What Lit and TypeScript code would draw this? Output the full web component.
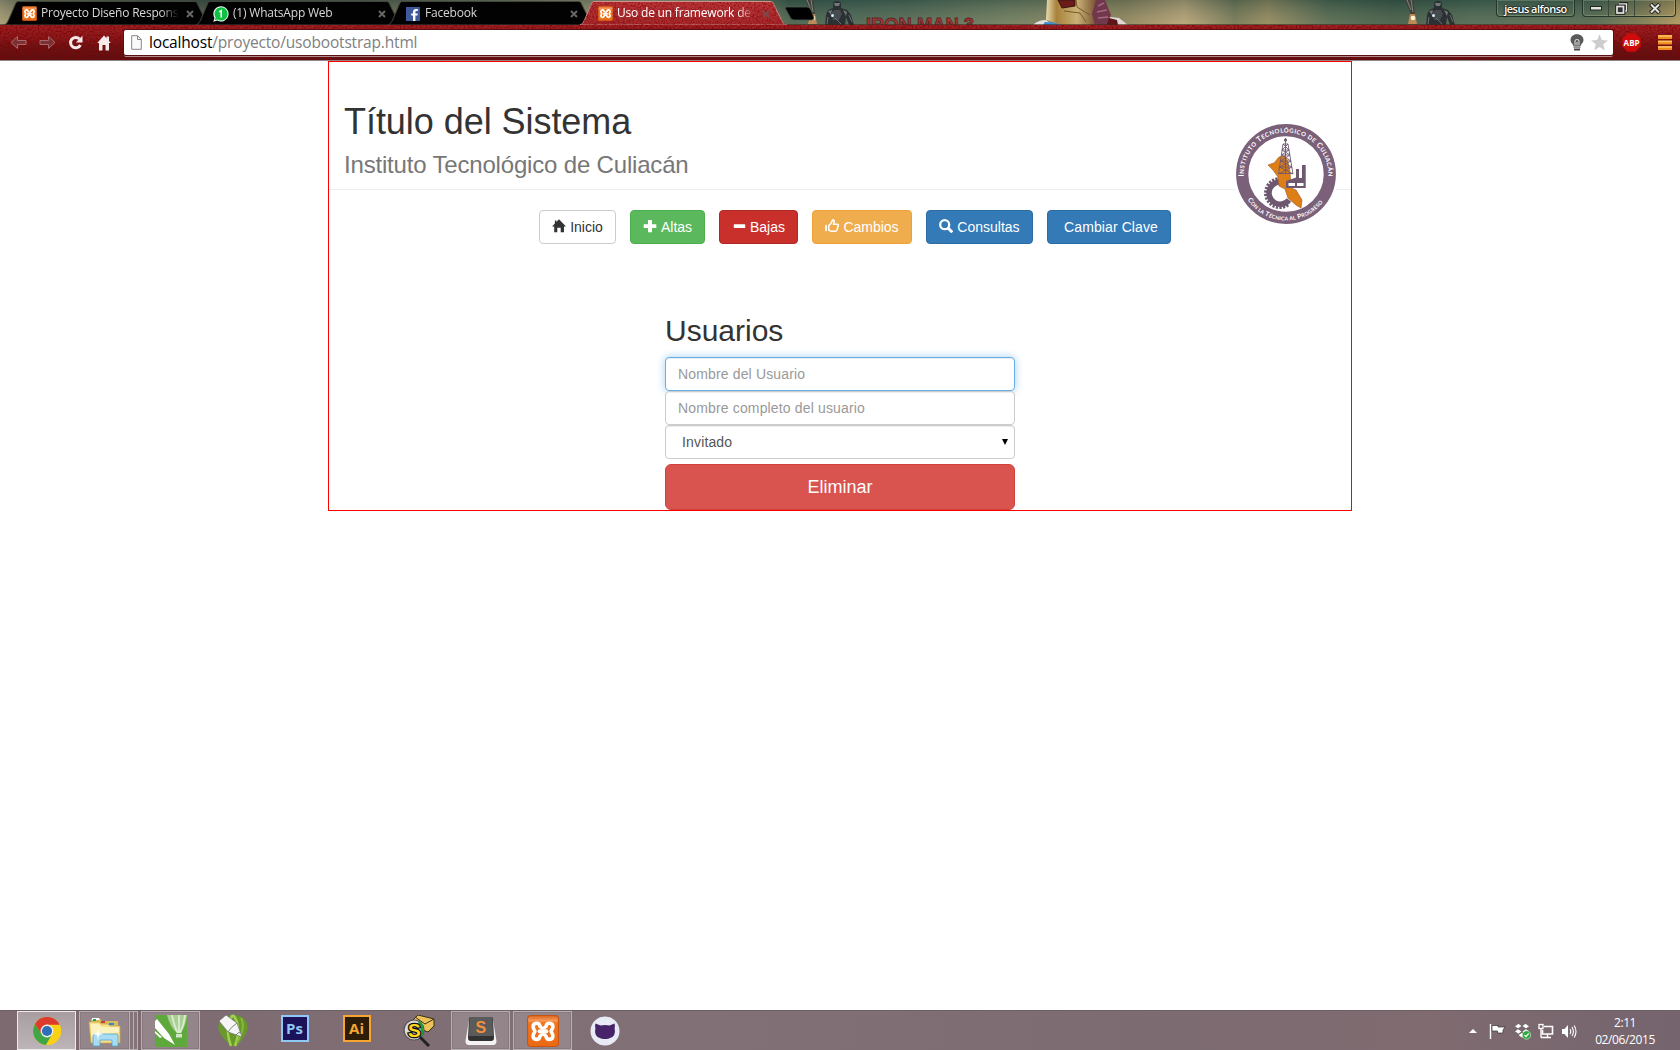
import { LitElement, html, css, svg, nothing } from "lit";
import { customElement, property } from "lit/decorators.js";

const xampp = (size: number) => html`<svg width=${size} height=${size} viewBox="0 0 24 24">
  <defs><linearGradient id="xo" x1="0" y1="0" x2="0" y2="1"><stop offset="0" stop-color="#d9631a"/><stop offset=".16" stop-color="#f59a5c"/><stop offset=".24" stop-color="#f0751f"/><stop offset="1" stop-color="#ea6a14"/></linearGradient></defs>
  <rect x=".4" y=".4" width="23.2" height="23.2" rx="2.4" fill="url(#xo)" stroke="#c9540f" stroke-width=".8"/>
  <path d="M9.700 8.400 C9.200 5.500 4.600 5.300 4.600 8.900 C4.600 10.700 5.900 11 5.900 12.200 C5.900 13.400 4.600 13.800 4.600 15.600 C4.600 19.200 9.200 19 9.700 16 M14.300 8.400 C14.800 5.500 19.400 5.300 19.400 8.900 C19.400 10.700 18.100 11 18.100 12.200 C18.100 13.400 19.400 13.800 19.400 15.600 C19.400 19.200 14.800 19 14.300 16" fill="none" stroke="#fff" stroke-width="2.700" stroke-linecap="round"/>
  <path d="M9.700 8.400 Q10.300 9.800 12 9.800 Q13.700 9.800 14.300 8.400 M9.700 16 Q10.300 14.600 12 14.600 Q13.700 14.600 14.300 16" fill="none" stroke="#fff" stroke-width="2.300"/>
  <path d="M9.600 12.200 H14.400" stroke="#fff" stroke-width="3.200" stroke-linecap="round"/>
</svg>`;

const whatsapp = html`<svg width="16" height="16" viewBox="0 0 16 16">
  <path d="M.3 15.7 L1.5 11.9 A7.6 7.6 0 1 1 4.4 14.6 Z" fill="#fff"/>
  <path d="M1.8 14.2 L2.6 11.6 A6.6 6.6 0 1 1 4.6 13.5 Z" fill="#0fc143"/>
  <path d="M6.1 6 L8.2 4.6 V11.4" fill="none" stroke="#fff" stroke-width="1.5"/>
</svg>`;

const facebook = html`<svg width="14" height="14" viewBox="0 0 14 14">
  <rect width="14" height="14" fill="#3f5a9c"/>
  <path d="M7 14 V8.6 H5.2 V6.5 H7 V5 C7 3 8.2 2 10 2 H11.8 V4.1 H10.5 C9.7 4.1 9.4 4.5 9.4 5.2 V6.5 H11.7 L11.4 8.6 H9.4 V14 Z" fill="#fff"/>
</svg>`;

@customElement("browser-tab")
class BrowserTab extends LitElement {
  static styles = css`
    :host { display: flex; position: relative; width: 208px; height: 25px; margin-right: -16px; flex: none; }
    .shape { position: absolute; left: 0; top: 0; }
    .row { position: relative; display: flex; align-items: center; width: 208px; padding: 2px 0 0 17px; box-sizing: border-box; height: 25px; }
    .icon { display: flex; width: 16px; justify-content: center; }
    .label { margin: -2px 7px 0 4px; flex: none; width: 138px; font: 12px/16px "Open Sans", sans-serif; letter-spacing: -0.2px; color: #d8d8d8; white-space: nowrap; overflow: hidden;
      -webkit-mask-image: linear-gradient(90deg, #000 calc(100% - 18px), transparent 100%); }
    .on .label { color: #fff; }
    .close { display: flex; }
  `;
  @property() label = "";
  @property() icon = "xampp";
  @property({ type: Boolean }) active = false;
  render() {
    const a = this.active;
    return html`
      <svg class="shape" width="208" height="25" viewBox="0 0 208 25">
        <defs>
          <linearGradient id="red" x1="0" y1="0" x2="0" y2="1"><stop offset="0" stop-color="#b8373b"/><stop offset="1" stop-color="#a32a2e"/></linearGradient>
          <filter id="grain" x="0" y="0" width="1" height="1"><feTurbulence type="fractalNoise" baseFrequency=".55" numOctaves="2"/><feColorMatrix values="0 0 0 0 .25  0 0 0 0 0  0 0 0 0 0  1.8 0 0 0 -.72"/><feComposite in2="SourceGraphic" operator="in"/></filter>
        </defs>
        <path d="M0 25 C3 24 3.5 22 5 19 L11 5 C12 2 13 1.5 15 1.5 H190 C192 1.5 193 2 194 5 L201 19 C202.500 22 203 24.500 207 25 Z" fill=${a ? "url(#red)" : "#020202"} stroke=${a ? "#cf8f8c" : "#43443a"} stroke-width="1"/>
        ${a ? svg`<path d="M0 25 L5 19 L12 2 H193 L201 19 L207 25 Z" fill="#000" filter="url(#grain)"/>` : nothing}
      </svg>
      <div class="row ${a ? "on" : ""}">
        <span class="icon">${this.icon === "xampp" ? xampp(15) : this.icon === "wa" ? whatsapp : facebook}</span>
        <span class="label">${this.label}</span>
        <svg class="close" width="8" height="8" viewBox="0 0 8 8"><path d="M1 1 L7 7 M7 1 L1 7" stroke=${a ? "#7d4a4b" : "#666"} stroke-width="2"/></svg>
      </div>`;
  }
}

const armor = (x: number) => svg`<g transform="translate(${x} 0)">
  <path d="M0 25 L1 15 L3 10 L8 8 L8 3 L10 1 H14 L16 3 V8 L22 10 L26 15 L29 25 H24 L21 17 L20 25 Z" fill="#2b3033"/>
  <path d="M9 3 H15 L14 6 H10 Z M3 11 L7 10 L6 15 Z M18 10 L22 12 L21 16 Z" fill="#73787a"/>
  <path d="M6 12 L10 10 L15 10 L17 14 L14 20 H8 Z" fill="#454b4e"/>
  <path d="M10 18 L16 24 M3 17 L2 24 M24 15 L27 22" stroke="#6b7073" stroke-width="1"/>
  <circle cx="7.500" cy="15.500" r="1.500" fill="#d6f0f5"/>
</g>`;

const flyer = (x: number) => svg`<g transform="translate(${x} 0)">
  <path d="M0 0 H8 L9 6 L10 15 H6 L3 7 Z" fill="#3f403b"/>
  <path d="M2 0 L6 10 M6 0 L8 12" stroke="#85857a" stroke-width="1"/>
  <path d="M5 14 H10 L11 19 L12 24 H3 Z" fill="#e0955a" opacity=".75"/><circle cx="8" cy="18" r="2.300" fill="#fff3cf"/>
</g>`;

const frameArt = html`<svg class="art" width="1680" height="25" viewBox="0 0 1680 25">
  <defs>
    <linearGradient id="fr" x1="0" x2="1680" y1="0" y2="0" gradientUnits="userSpaceOnUse">
      <stop offset="0" stop-color="#a59b78"/><stop offset=".02" stop-color="#6d6d55"/><stop offset=".13" stop-color="#3d4a42"/><stop offset=".3" stop-color="#71755e"/>
      <stop offset=".38" stop-color="#a1997a"/><stop offset=".44" stop-color="#8a8967"/><stop offset=".47" stop-color="#3b594b"/><stop offset=".5" stop-color="#3d5d52"/>
      <stop offset=".54" stop-color="#486455"/><stop offset=".6" stop-color="#66785e"/><stop offset=".67" stop-color="#8b835e"/><stop offset=".705" stop-color="#b7a47b"/>
      <stop offset=".735" stop-color="#6e7557"/><stop offset=".755" stop-color="#8e875f"/><stop offset=".79" stop-color="#4a6450"/><stop offset=".83" stop-color="#365446"/>
      <stop offset=".88" stop-color="#446253"/><stop offset=".95" stop-color="#48624f"/><stop offset=".98" stop-color="#7d7a54"/><stop offset="1" stop-color="#b0965d"/>
    </linearGradient>
    <linearGradient id="sh" x1="0" x2="0" y1="0" y2="1"><stop offset="0" stop-color="#17352f" stop-opacity=".3"/><stop offset="1" stop-color="#d5c28b" stop-opacity=".18"/></linearGradient>
    <linearGradient id="gold" x1="0" x2="1" y1="0" y2="0"><stop offset="0" stop-color="#e8dcb0"/><stop offset=".2" stop-color="#a9823c"/><stop offset=".6" stop-color="#c9b176"/><stop offset="1" stop-color="#6f4a2c"/></linearGradient>
  </defs>
  <rect width="1680" height="25" fill="url(#fr)"/><rect width="1680" height="25" fill="url(#sh)"/>
  ${flyer(805)}${armor(825)}${flyer(1405)}${armor(1426)}
  <text x="866" y="31" font-family="Liberation Sans" font-weight="bold" font-size="19" textLength="108" lengthAdjust="spacingAndGlyphs" fill="#a8383a" stroke="#5a2522" stroke-width=".9">IRON MAN 3</text>
  <path d="M1033 25 Q1038 20 1046 20 L1052 25 Z" fill="#e4e1dc"/>
  <path d="M1045 22 L1058 23 L1064 25 H1043 Z" fill="#3c8fd6"/>
  <path d="M1047 0 H1098 L1094 14 L1096 25 H1062 L1046 20 Z" fill="url(#gold)"/>
  <path d="M1058 0 H1075 V6 L1062 8 Z" fill="#6b1c18" stroke="#3a1512"/>
  <path d="M1076 0 L1077 7 L1090 15 M1064 11 L1080 13 L1086 22" fill="none" stroke="#7b5a2a" stroke-width="1"/>
  <path d="M1096 0 H1105 L1111 15 L1108 25 H1095 L1092 14 Z" fill="#71374b"/>
  <path d="M1098 6 L1104 3 M1097 12 L1107 10 M1098 18 L1108 17" stroke="#a56a80" stroke-width="1.500"/>
  <path d="M1110 17 L1119 18 L1128 25 H1106 Z" fill="#e0d9d6"/><path d="M1109 18 L1117 20 L1118 25 H1106 Z" fill="#5e1519"/>
  <path d="M786 7 H807 Q810 7 811 10 L814 18 Q814 20 811 20 H794 Q791 20 790 17 L785 8 Z" fill="#000" stroke="#4c5d51" stroke-width=".8"/>
  <rect y="24" width="1680" height="1" fill="#3a2a20" opacity=".6"/>
</svg>`;

const glyphs: Record<string, unknown> = {
  home: svg`<path d="M7 .2 L14 7.400 H12 V13.300 H8.700 V8.800 H5.300 V13.300 H2.200 V7.400 H0 L2.900 4.400 V1.500 H4.400 V2.900 Z" fill="#333"/>`,
  plus: svg`<path d="M5 1 H9 V5.200 H13.300 V8.900 H9 V13.200 H5 V8.900 H.7 V5.200 H5 Z" fill="#fff"/>`,
  minus: svg`<rect x="1.800" y="5.200" width="11.400" height="3.800" rx=".6" fill="#fff"/>`,
  thumb: svg`<rect x=".2" y="5.800" width="1.700" height="6.400" rx=".6" fill="#fff"/><path d="M3.800 6.300 C5.600 5.400 6.800 3.600 7.300 1.500 C7.600 .5 9.500 .9 9.300 2.700 C9.200 3.700 8.700 4.500 8.400 5.200 H12.200 C13.700 5.200 13.600 6.800 12.900 7.200 L12 10.900 C11.700 12 11.200 12.300 10.200 12.300 H6.700 C5.300 12.300 4.700 11.400 3.800 11.300 Z" fill="none" stroke="#fff" stroke-width="1.500" stroke-linejoin="round"/>`,
  search: svg`<circle cx="5.700" cy="5.700" r="4.500" fill="none" stroke="#fff" stroke-width="2.300"/><path d="M8.900 8.900 L13.300 13.300" stroke="#fff" stroke-width="2.900"/>`,
};

const teeth = Array.from({ length: 17 }, (_, i) => {
  const a = ((60 + i * 14) * Math.PI) / 180;
  const c = Math.cos(a), s = Math.sin(a);
  return svg`<line x1=${44 + c * 11} y1=${69 + s * 11} x2=${44 + c * 16} y2=${69 + s * 16} stroke="#6d5870" stroke-width="2.300"/>`;
});

const seal = html`<svg class="seal" width="100" height="100" viewBox="0 0 100 100">
  <defs><path id="up" d="M8.500 59 A42.300 42.300 0 1 1 91.500 59"/><path id="dn" d="M6.500 66 A46.300 46.300 0 0 0 93.500 66"/></defs>
  <rect width="100" height="100" fill="#fff"/>
  <circle cx="50" cy="50" r="43.800" fill="none" stroke="#7a6079" stroke-width="12.200"/>
  <g fill="#fff" font-family="Lato, sans-serif" font-weight="bold">
    <text font-size="7.500"><textPath href="#up" startOffset="6.500" textLength="136">I<tspan font-size="6">NSTITUTO</tspan> T<tspan font-size="6">ECNOLÓGICO DE</tspan> C<tspan font-size="6">ULIACÁN</tspan></textPath></text>
    <text font-size="6.600"><textPath href="#dn" startOffset="11" textLength="88">C<tspan font-size="5.200">ON LA</tspan> T<tspan font-size="5.200">ÉCNICA AL</tspan> P<tspan font-size="5.200">ROGRESO</tspan></textPath></text>
  </g>
  ${teeth}
  <path d="M48 58.500 A11.200 11.200 0 1 0 53 76" fill="none" stroke="#6d5870" stroke-width="5.500"/>
  <path d="M32 41 L38 39 L43 33 L49 32 L52 38 L54 48 L55 64 L60 66 L66 76 L65 84 L60 81 L52 74 L49 65 L43 62 L42 53 L37 46 Z" fill="#dd7e16" stroke="#a86228" stroke-width=".7"/>
  <g fill="none" stroke="#6d5870" stroke-width=".9">
    <path d="M49.500 14 V20 M47 20 L42.500 50 M52 20 L57 50 M47 20 H52 M46 26 H53 M45.500 31 H54 M44.500 37 H55 M43.500 43 H56 M42.500 49.500 H57 M47 20 L53 26 L45.500 31 L55 37 L43.500 43 L57 50 M52 20 L46 26 L54 31 L44.500 37 L56 43 L42.500 50 M49.500 20 V50"/>
  </g>
  <circle cx="49.500" cy="16" r="1.600" fill="#6d5870"/>
  <path d="M50 57 L60 53.500 V45 H63 V54 H66 V41 H69.700 V64 H50 Z" fill="#6d5870"/>
  <path d="M52.500 59 H59 V62 H52.500 Z M61 59 H67.500 V62 H61 Z" fill="#fff"/>
</svg>`;

const navItems = [
  { t: "Inicio", g: "home", c: "inicio" },
  { t: "Altas", g: "plus", c: "altas" },
  { t: "Bajas", g: "minus", c: "bajas" },
  { t: "Cambios", g: "thumb", c: "cambios" },
  { t: "Consultas", g: "search", c: "consultas" },
  { t: "Cambiar Clave", g: "", c: "clave" },
];

const taskIcons: Record<string, unknown> = {
  chrome: html`<svg width="28" height="28" viewBox="0 0 28 28"><circle cx="14" cy="14" r="14" fill="#fdc90b"/>
    <path d="M1.900 7 A14 14 0 0 0 13 28 L19.500 17 L14 14 L8.500 17 Z" fill="#3fa546"/>
    <path d="M14 7.700 H26.600 A14 14 0 0 1 13 28 L19.400 17 Z" fill="#fbd116"/><path d="M1.900 7 A14 14 0 0 1 26.600 7.700 H14 L8.500 17 Z" fill="#dc3b2e"/>
    <circle cx="14" cy="14" r="6.400" fill="#f2efe9"/><circle cx="14" cy="14" r="5.100" fill="#2f6fb7"/></svg>`,
  folder: html`<svg width="34" height="32" viewBox="0 0 34 32">
    <path d="M3 4 H12 L14 6 H30 V26 H3 Z" fill="#d9bb5f"/><path d="M4 3 h7 l1 2 h-8 z" fill="#fff"/><rect x="5" y="4" width="3" height="2" fill="#1ea44b"/><rect x="13" y="6" width="4" height="2" fill="#cf3a2b"/><rect x="21" y="8" width="5" height="2" fill="#2d86d9"/>
    <path d="M1 7 H11 L13 9 H20 L22 11 H32 V28 H3 Z" fill="#f6e291" stroke="#c9a548" stroke-width=".8"/><path d="M3 9 H11 L13 12 H31 V17 L3 22 Z" fill="#fcf2bd"/>
    <path d="M5 31 V21 Q5 19 7 19 H28 Q30 19 30 21 V31 H24 V26 Q24 25 23 25 H13 Q12 25 12 26 V31 Z" fill="#a9dcf3" stroke="#4ba3cf" stroke-width=".8"/>
    <path d="M10 13 L11 18 L16 19 L11 20 L10 25 L9 20 L4 19 L9 18 Z" fill="#fff"/></svg>`,
  corelx: html`<svg width="32" height="32" viewBox="0 0 32 32"><rect width="32" height="32" fill="#5fa83c"/><path d="M12 0 Q15 12 22 18 H26 Q31 10 32 0 Z" fill="#a9cf92"/><path d="M17 0 Q19 11 23 18 M24 0 V18 M30 0 Q29 10 25 18" stroke="#dcebd2" stroke-width="1.800" fill="none"/><rect x="21" y="19" width="6" height="3.500" fill="#d4e6ca"/><path d="M0 6 L2 4 L14 19 L20 30 L9 23 L0 13 Z" fill="#fff"/><path d="M0 16 L7 22 L5 23 L0 18 Z" fill="#fff"/></svg>`,
  corel: html`<svg width="32" height="34" viewBox="0 0 32 34"><path d="M16 1 C26 1 31 7 30.500 14 C30 21 24 26 20 32 H13 C9 26 2 21 1.500 14 C1 7 6 1 16 1 Z" fill="#69992b"/><path d="M16 1 C8 10 11 24 14 32 M16 1 C24 10 21 24 18 32" stroke="#a3cf52" stroke-width="2.500" fill="none"/><path d="M24 4 C28 12 25 20 20 29" stroke="#86b83b" stroke-width="2" fill="none"/><path d="M2 7 L9 1 L20 9 L25 23 L11 18 Z" fill="#f5f5f5" stroke="#6b6b6b" stroke-width=".7"/><path d="M11 18 Q14 13 20 9 M19 21 Q21 18 23.500 18.500" stroke="#777" stroke-width=".9" fill="none"/></svg>`,
  ps: html`<span class="adobe ps">Ps</span>`,
  ai: html`<span class="adobe ai">Ai</span>`,
  find: html`<svg width="32" height="32" viewBox="0 0 32 32"><path d="M10 5 L15 0 L31 4 V11 L25 17 L9 11 Z" fill="#ecc35a" stroke="#3b2f12"/><path d="M12 2 L22 9 L31 4" fill="none" stroke="#3b2f12"/><circle cx="11" cy="15" r="10" fill="#d9dcdb" stroke="#555" stroke-width="1.200"/><path d="M16 7 Q22 13 17 22" stroke="#1e9e3a" stroke-width="3" fill="none"/><path d="M17 22 L26 31" stroke="#222" stroke-width="3"/><text x="5" y="22" font-family="Liberation Sans" font-weight="bold" font-size="19" fill="#ffd81c" stroke="#111" stroke-width="2.600" paint-order="stroke">S</text></svg>`,
  sublime: html`<svg width="32" height="30" viewBox="0 0 32 30"><path d="M4 4 H28 L31.500 25 Q31.500 29 28 29 H4 Q.5 29 .5 25 Z" fill="#f4f2f2"/><path d="M6 1 H26 Q28 1 28 3 L29 22 Q29 25 26 25 H6 Q3 25 3 22 L4 3 Q4 1 6 1 Z" fill="#323232"/><path d="M6 1 H26 Q27.500 1 27.500 3 L28 20 H4 L4.500 3 Q4.500 1 6 1 Z" fill="#5b5b5b"/><text x="10.500" y="17" font-family="Liberation Sans" font-weight="bold" font-size="16" fill="#f2903d">S</text></svg>`,
  xampp: xampp(32),
  github: html`<svg width="30" height="30" viewBox="0 0 30 30"><circle cx="15" cy="15" r="14.500" fill="#e8ebf6"/><path d="M5.500 7.500 L10.500 9.500 Q15 8.600 19.500 9.500 L24.500 7.500 Q25.300 10 24.600 12 Q26.500 21 19 22.500 Q15 23.500 11 22.500 Q3.500 21 5.400 12 Q4.700 10 5.500 7.500 Z" fill="#472469"/></svg>`,
};

@customElement("app-root")
class AppRoot extends LitElement {
  static styles = css`
    :host { display: flex; flex-direction: column; width: 1680px; height: 1050px; overflow: hidden; background: #fff; font-family: "Liberation Sans", Arial, sans-serif; color: #333; }
    svg { display: block; flex: none; }
    .frame { position: relative; height: 25px; display: flex; justify-content: space-between; overflow: hidden; }
    .art { position: absolute; left: 0; top: 0; }
    .tabs { position: relative; display: flex; padding-left: 4px; }
    .wins { position: relative; display: flex; padding-right: 4px; height: 17px; gap: 7px; }
    .box { display: flex; height: 16px; border: 1px solid #25352c; border-top: 0; border-radius: 0 0 4px 4px; box-shadow: inset 0 0 0 1px rgba(220,230,200,.22); }
    .user { width: 77px; justify-content: center; font: 600 11px/17px "Open Sans", sans-serif; color: #fff; letter-spacing: -.5px; text-shadow: 0 0 2px #000, 0 0 2px #000; }
    .w { display: flex; justify-content: center; align-items: center; border-right: 1px solid #39483b; }
    .w:last-child { border: 0; }
    .w1 { width: 25px; } .w2 { width: 25px; } .w3 { width: 40px; }

    .toolbar { position: relative; height: 36px; box-sizing: border-box; display: flex; align-items: center; background: linear-gradient(#a02226, #8a1a1d 35%, #6d1416 60%, #591214); border-bottom: 1px solid #8f8683; padding: 0 7px 0 10px; }
    .grain { position: absolute; left: 0; top: 0; }
    .nav-i { position: relative; display: flex; align-items: center; width: 114px; gap: 14px; }
    .gap { margin-left: -2px; }
    .omni { position: relative; box-sizing: border-box; width: 1489px; height: 25px; background: #fff; border-radius: 2px; display: flex; align-items: center; padding: 0 5px 0 7px; box-shadow: 0 0 0 1px #5a1013, 0 2px 0 0 #b08a88; }
    .url { flex: 1; margin: -1px 0 0 7px; font: 15.500px/22px "Open Sans", sans-serif; letter-spacing: -.18px; color: #808080; }
    .url b { color: #000; font-weight: 400; }
    .star { margin-left: 7px; }
    .exts { position: relative; display: flex; align-items: center; margin-left: 9px; gap: 17px; }

    .page { flex: 1; display: flex; justify-content: center; align-items: flex-start; }
    .container { position: relative; box-sizing: border-box; width: 1024px; height: 450px; border: 1px solid #f00; display: flex; flex-direction: column; }
    .head { box-sizing: border-box; height: 128px; border-bottom: 1px solid #eee; padding: 40px 15px 0; display: flex; flex-direction: column; gap: 10px; }
    h1, h2, h3 { margin: 0; font-weight: 400; }
    h1 { font-size: 36px; line-height: 39.600px; letter-spacing: -.05px; }
    h3 { font-size: 24px; line-height: 26.400px; color: #777; letter-spacing: -.18px; }
    .seal { position: absolute; left: 907px; top: 62px; }
    .nav { display: flex; gap: 14px; margin: 20px 0 0 210px; }
    .btn { box-sizing: border-box; height: 34px; border: 1px solid; border-radius: 4px; display: flex; align-items: center; justify-content: center; gap: 4px; font-size: 14px; color: #fff; white-space: nowrap; }
    .btn svg { margin-top: -3px; }
    .inicio { width: 77px; background: #fff; border-color: #ccc; color: #333; }
    .altas { width: 75px; background: #5cb85c; border-color: #4cae4c; }
    .bajas { width: 79px; background: #c9302c; border-color: #ac2925; }
    .cambios { width: 100px; background: #f0ad4e; border-color: #eea236; }
    .consultas { width: 107px; background: #337ab7; border-color: #2e6da4; }
    .clave { width: 124px; background: #337ab7; border-color: #2e6da4; padding-left: 4px; letter-spacing: .1px; }
    .form { width: 350px; margin: 70px 0 0 336px; display: flex; flex-direction: column; }
    h2 { font-size: 30px; line-height: 33px; margin-bottom: 10px; }
    .field { box-sizing: border-box; width: 350px; height: 34px; border: 1px solid #ccc; border-radius: 4px; padding: 0 12px; font: 14px "Liberation Sans", Arial, sans-serif; letter-spacing: .15px; color: #555; background: #fff; box-shadow: inset 0 1px 1px rgba(0,0,0,.075); outline: 0; margin: 0; }
    .field::placeholder { color: #999; opacity: 1; }
    .focus { border-color: #66afe9; box-shadow: inset 0 1px 1px rgba(0,0,0,.075), 0 0 8px rgba(102,175,233,.6); }
    .pick { display: flex; align-items: center; justify-content: space-between; padding: 0 6px 0 16px; }
    .del { height: 46px; margin-top: 5px; border: 1px solid #d43f3a; border-radius: 6px; background: #d9534f; color: #fff; font: 18px "Liberation Sans", Arial, sans-serif; padding: 0; }

    .task { height: 40px; box-sizing: border-box; display: flex; justify-content: space-between; background: linear-gradient(90deg, #7c6a70, #817076 40%, #7d6b72 70%, #7f6b70 85%, #75646e); border-top: 1px solid #6e5f65; padding-left: 17px; }
    .apps { display: flex; }
    .app { box-sizing: border-box; height: 39px; width: 59px; display: flex; align-items: center; justify-content: center; border: 1px solid transparent; margin-right: 3px; }
    .open { background: #938589; border-color: #b9aeb2; box-shadow: inset 0 0 0 1px rgba(90,75,80,.2); }
    .cur { background: linear-gradient(#a89ea1, #bdb4b7); border-color: #efebec; }
    .stack { box-sizing: border-box; width: 4px; height: 39px; border: 1px solid #b9aeb2; border-left: 0; background: #84757a; }
    .app.exp { width: 51px; margin: 0; }
    .cx { margin-left: 3px; }
    .adobe { box-sizing: border-box; width: 28px; height: 27px; font: 700 15px/22px "Open Sans", sans-serif; text-align: center; margin-top: -4px; }
    .ps { background: #1b1259; border: 2px solid #8fc7f5; color: #8fc7f5; }
    .ai { background: #2c1c08; border: 2px solid #f7a530; color: #f7a530; }
    .tray { display: flex; align-items: center; padding-right: 26px; }
    .clock { display: flex; flex-direction: column; align-items: center; width: 58px; margin-left: 19px; font: 12px/17px "Open Sans", sans-serif; letter-spacing: -.4px; color: #fff; white-space: nowrap; }
  `;

  render() {
    const app = (n: string, c = "") => html`<div class="app ${c}">${taskIcons[n]}</div>`;
    return html`
      <div class="frame">
        ${frameArt}
        <div class="tabs">
          <browser-tab label="Proyecto Diseño Responsi"></browser-tab>
          <browser-tab label="(1) WhatsApp Web" icon="wa"></browser-tab>
          <browser-tab label="Facebook" icon="fb"></browser-tab>
          <browser-tab label="Uso de un framework de C" active></browser-tab>
        </div>
        <div class="wins">
          <div class="box user">jesus alfonso</div>
          <div class="box">
            <div class="w w1"><svg width="12" height="6"><rect x=".5" y="1.500" width="11" height="3.500" fill="#e5e5e0" stroke="#222"/></svg></div>
            <div class="w w2"><svg width="13" height="13" viewBox="0 0 13 13"><path d="M4.500 1.500 H11.500 V8.500 H9" fill="none" stroke="#222" stroke-width="3"/><path d="M4 2 H11.500 V9 H9" fill="none" stroke="#e5e5e0" stroke-width="1.400"/><rect x="2" y="4.500" width="6.500" height="6.500" fill="none" stroke="#222" stroke-width="3.600"/><rect x="2" y="4.500" width="6.500" height="6.500" fill="#333" stroke="#e5e5e0" stroke-width="1.700"/></svg></div>
            <div class="w w3"><svg width="12" height="11" viewBox="0 0 12 11"><path d="M1.500 1 L10.500 10 M10.500 1 L1.500 10" stroke="#222" stroke-width="4"/><path d="M2 1.500 L10 9.500 M10 1.500 L2 9.500" stroke="#e5e5e0" stroke-width="2"/></svg></div>
          </div>
        </div>
      </div>

      <div class="toolbar">
        <svg class="grain" width="1680" height="35"><filter id="n" x="0" y="0" width="1" height="1"><feTurbulence type="fractalNoise" baseFrequency=".5" numOctaves="2"/><feColorMatrix values="0 0 0 0 .2  0 0 0 0 0  0 0 0 0 0  2 0 0 0 -.75"/></filter><rect width="1680" height="35" filter="url(#n)"/></svg>
        <div class="nav-i">
          <svg width="17" height="15" viewBox="0 0 17 15"><path d="M1 7.500 L7.500 1.500 V5.500 H16 V9.500 H7.500 V13.500 Z" fill="#7d3033" stroke="#a9696a"/></svg>
          <svg class="gap" width="17" height="15" viewBox="0 0 17 15"><path d="M16 7.500 L9.500 1.500 V5.500 H1 V9.500 H9.500 V13.500 Z" fill="#7d3033" stroke="#a9696a"/></svg>
          <svg class="gap" width="15" height="16" viewBox="0 0 15 16"><path d="M11.500 4 A5.200 5.200 0 1 0 12.400 10" fill="none" stroke="#f4eaea" stroke-width="3"/><path d="M14.500 .8 V7.500 H7.800 Z" fill="#f4eaea"/></svg>
          <svg width="14" height="16" viewBox="0 0 14 16"><path d="M7 .5 L9.500 3.200 V1.500 H12 V6 L13.800 8 H12 V15.500 H8.500 V10 H5.500 V15.500 H2 V8 H.2 Z" fill="#f4eaea"/></svg>
        </div>
        <div class="omni">
          <svg width="11" height="15" viewBox="0 0 11 15"><path d="M.7 .7 H6.500 L10.300 4.500 V14.300 H.7 Z M6.500 .7 V4.500 H10.300" fill="#fafafa" stroke="#888"/></svg>
          <span class="url"><b>localhost</b>/proyecto/usobootstrap.html</span>
          <svg width="14" height="17" viewBox="0 0 14 17"><path d="M7 .3 C11 .3 13.500 3 13.500 6 C13.500 8.500 11.500 9.500 10.500 12 H3.500 C2.500 9.500 .5 8.500 .5 6 C.5 3 3 .3 7 .3 Z" fill="#5a5a5a"/><path d="M5 11.500 V7.500 Q5 5.500 7 5.500 Q9 5.500 9 7.500 V11.500 M7 8 V11.500" fill="none" stroke="#d8d8d8" stroke-width="1.100"/><rect x="3.500" y="12.300" width="7" height="1.500" fill="#777"/><rect x="4" y="14.500" width="6" height="2" fill="#444"/></svg>
          <svg class="star" width="17" height="17" viewBox="0 0 17 17"><path d="M8.500 .3 L10.800 6 L17 6.400 L12.200 10.300 L13.800 16.500 L8.500 13 L3.200 16.500 L4.800 10.300 L0 6.400 L6.200 6 Z" fill="#cdcdcd"/></svg>
        </div>
        <div class="exts">
          <svg width="19" height="19" viewBox="0 0 19 19"><path d="M5.700 .3 H13.300 L18.700 5.700 V13.300 L13.300 18.700 H5.700 L.3 13.300 V5.700 Z" fill="#cf0a0a"/><text x="1.600" y="12.600" font-family="Open Sans" font-weight="bold" font-size="8.500" textLength="16" lengthAdjust="spacingAndGlyphs" fill="#fff">ABP</text></svg>
          <svg width="14" height="15" viewBox="0 0 14 15"><path d="M0 0 H14 V4 H0 Z M0 5.500 H14 V9.500 H0 Z M0 11 H14 V15 H0 Z" fill="#f08c1a"/><path d="M0 1 H14 M0 6.500 H14 M0 12 H14" stroke="#fbc26b" stroke-width="1.400"/></svg>
        </div>
      </div>

      <div class="page">
        <div class="container">
          <div class="head"><h1>Título del Sistema</h1><h3>Instituto Tecnológico de Culiacán</h3></div>
          ${seal}
          <div class="nav">
            ${navItems.map((n) => html`<div class="btn ${n.c}">${n.g ? html`<svg width="14" height="14" viewBox="0 0 14 14">${glyphs[n.g]}</svg>` : nothing}<span>${n.t}</span></div>`)}
          </div>
          <div class="form">
            <h2>Usuarios</h2>
            <input class="field focus" placeholder="Nombre del Usuario" />
            <input class="field" placeholder="Nombre completo del usuario" />
            <div class="field pick"><span>Invitado</span><svg width="6" height="6" viewBox="0 0 6 6"><path d="M0 0 H6 L3 6 Z" fill="#000"/></svg></div>
            <button class="del">Eliminar</button>
          </div>
        </div>
      </div>

      <div class="task">
        <div class="apps">
          ${app("chrome", "cur")}
          <div class="app open exp">${taskIcons.folder}</div><div class="stack"></div><div class="stack"></div>
          ${app("corelx", "open cx")}${app("corel")}${app("ps")}${app("ai")}${app("find")}${app("sublime", "open")}${app("xampp", "open")}${app("github")}
        </div>
        <div class="tray">
          <svg width="108" height="20" viewBox="0 0 108 20">
            <path d="M0 12 L4 8 L8 12 Z" fill="#fff"/>
            <path d="M21.500 3 V18" stroke="#fff" stroke-width="1.400"/><path d="M23 4.500 H29 V6 H36 L34 9 V12 H28.500 V10 H23 Z" fill="#fff" stroke="#3d3337" stroke-width=".7"/>
            <path d="M49.500 2.500 L53 5 L49 7.800 L45.500 5.300 Z M56.500 2.500 L60.500 5.300 L57 7.800 L53 5 Z M49 7.800 L53 10.500 L49.500 13 L45.500 10.500 Z M57 7.800 L60.500 10.500 L56.500 13 L53 10.500 Z M49 14 L53 11.500 L57 14 L53 17 Z" fill="#fff" stroke="#4a4045" stroke-width=".5"/><circle cx="57.500" cy="14" r="4.200" fill="#2bab3c" stroke="#d8f0da" stroke-width=".6"/><path d="M55.500 14 L57 15.700 L59.700 12.500" stroke="#fff" stroke-width="1.200" fill="none"/>
            <path d="M75 5.500 H83.500 V13 H73.500 V9" fill="none" stroke="#fff" stroke-width="1.600"/><rect x="70" y="3.500" width="4" height="4" fill="none" stroke="#fff" stroke-width="1.300"/><path d="M72 8 V16.500 M72 16.500 H82 M78.500 13 V16.500" stroke="#fff" stroke-width="1.400"/>
            <path d="M93 8 H95.500 L99 4 V17 L95.500 13 H93 Z" fill="#fff"/><path d="M101 8 Q102.500 10.500 101 13 M103 6 Q105.800 10.500 103 15 M105.200 4.500 Q108.800 10.500 105.200 16.500" fill="none" stroke="#fff" stroke-width="1.100"/>
          </svg>
          <div class="clock"><span>2:11</span><span>02/06/2015</span></div>
        </div>
      </div>
    `;
  }
}
